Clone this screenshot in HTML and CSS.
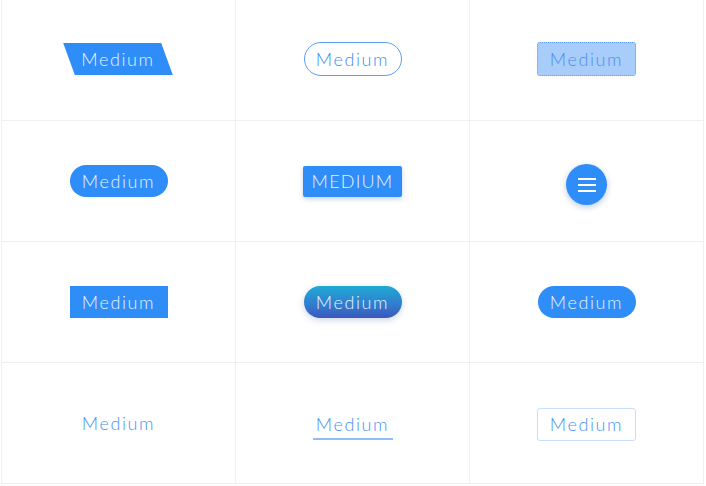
FILE: index.html
```html
<!DOCTYPE html>
<html lang="en">
<head>
<meta charset="utf-8">
<title>Button styles</title>
<link rel="stylesheet" href="styles.css">
</head>
<body>
<div class="grid">
  <div class="cell"><button class="btn btn-skew"><span>Medium</span></button></div>
  <div class="cell"><button class="btn btn-pill-outline">Medium</button></div>
  <div class="cell"><button class="btn btn-dotted">Medium</button></div>

  <div class="cell"><button class="btn btn-pill">Medium</button></div>
  <div class="cell"><button class="btn btn-raised">Medium</button></div>
  <div class="cell">
    <button class="btn-fab" aria-label="Menu">
      <svg width="18" height="14" viewBox="0 0 18 14"><path d="M0 1h18M0 7h18M0 13h18" stroke="#fff" stroke-width="2"/></svg>
    </button>
  </div>

  <div class="cell"><button class="btn btn-flat">Medium</button></div>
  <div class="cell"><button class="btn btn-gradient">Medium</button></div>
  <div class="cell"><button class="btn btn-pill">Medium</button></div>

  <div class="cell"><button class="btn btn-text">Medium</button></div>
  <div class="cell"><button class="btn btn-underline">Medium</button></div>
  <div class="cell"><button class="btn btn-ghost">Medium</button></div>
</div>
</body>
</html>
```

FILE: styles.css
```css
* { box-sizing: border-box; }

body {
  margin: 0 0 0 1px;
  background: #fff;
  font-family: "Lato", "Open Sans", sans-serif;
}

.grid {
  width: 703px;
  display: grid;
  grid-template-columns: repeat(3, 234px);
  grid-auto-rows: 121px;
  border-left: 1px solid #efefef;
}

.cell {
  border-right: 1px solid #efefef;
  border-bottom: 1px solid #efefef;
  display: flex;
  align-items: center;
  justify-content: center;
}

.btn {
  font-family: inherit;
  font-weight: 300;
  font-size: 18px;
  letter-spacing: 1.6px;
  width: 98px;
  height: 32px;
  padding: 0;
  border: none;
  background: none;
  cursor: pointer;
  color: #fff;
  display: flex;
  align-items: center;
  justify-content: center;
}

.btn-skew {
  position: relative;
  background: transparent;
  margin-top: -3px;
  margin-left: -1px;
}
.btn-skew::before {
  content: "";
  position: absolute;
  inset: 0;
  background: #2f8df8;
  transform: skewX(20deg);
}
.btn-skew span { position: relative; color: #e8f2ff; }

.btn-pill-outline {
  height: 34px;
  border: 1px solid #5b9ef2;
  border-radius: 17px;
  color: #3f8cee;
  margin-top: -2px;
}

.btn-dotted {
  width: 99px;
  height: 34px;
  background: #a9cdfb;
  border: 1px dotted #5a9ef5;
  border-radius: 3px;
  color: #4a8fec;
  margin-top: -2px;
}

.btn-pill {
  background: #2f8df8;
  border-radius: 16px;
  color: #e8f2ff;
}

.btn-raised {
  width: 99px;
  height: 31px;
  background: #2f8df8;
  border-radius: 2px;
  text-transform: uppercase;
  color: #e8f2ff;
  letter-spacing: 1.2px;
  box-shadow: 0 2px 5px rgba(30, 80, 150, 0.25);
}

.btn-fab {
  width: 41px;
  height: 41px;
  margin-top: 7px;
  padding: 0;
  border: none;
  border-radius: 50%;
  background: #2f8df8;
  box-shadow: 0 2px 6px rgba(30, 80, 150, 0.3);
  display: flex;
  align-items: center;
  justify-content: center;
  cursor: pointer;
}

.btn-flat {
  background: #2f8df8;
  color: #e8f2ff;
}

.btn-gradient {
  background: linear-gradient(180deg, #20a9d4 0%, #2f80cf 55%, #3b57bd 100%);
  border-radius: 16px;
  color: #e8f2ff;
  box-shadow: 0 2px 6px rgba(40, 80, 160, 0.25);
}

.btn-text {
  color: #4893f0;
}

.btn-underline {
  width: 80px;
  height: 32px;
  color: #4893f0;
  border-bottom: 2px solid #8fbdf6;
  padding-top: 2px;
  margin-top: 2px;
}

.btn-ghost {
  width: 99px;
  height: 33px;
  border: 1px solid #c6def9;
  border-radius: 3px;
  color: #4893f0;
  margin-top: 2px;
}
```
